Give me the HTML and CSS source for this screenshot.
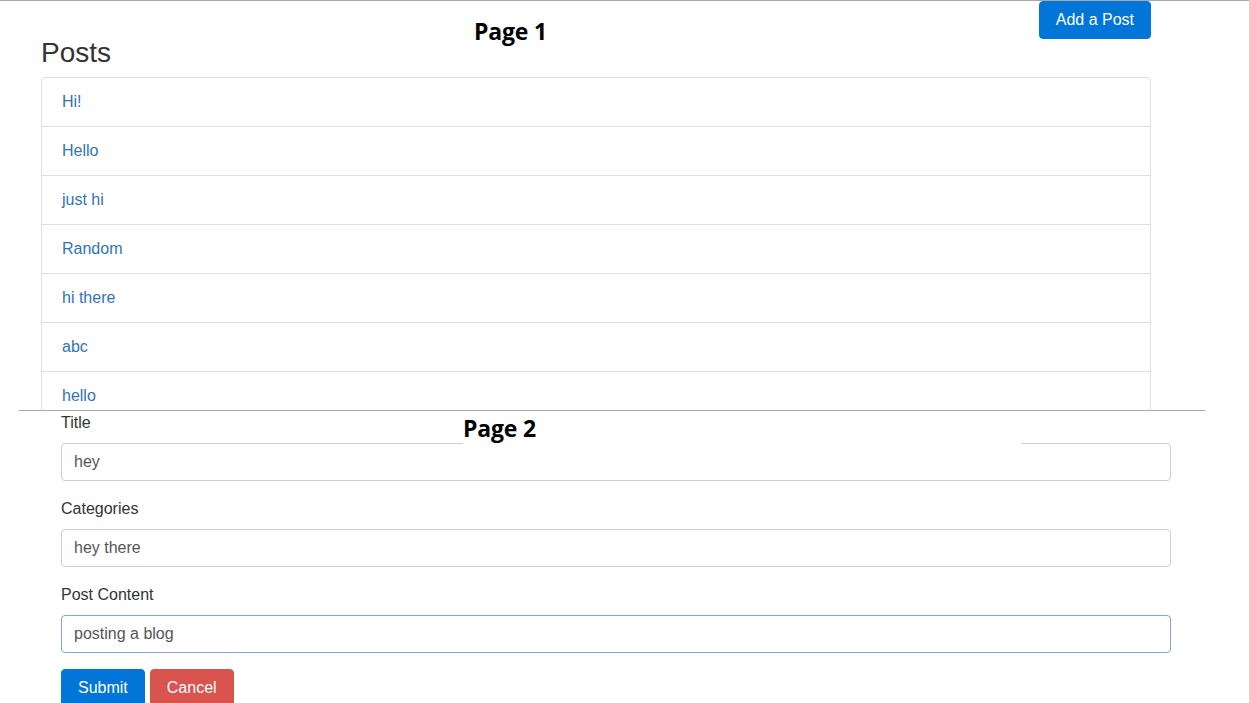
FILE: index.html
```html
<!DOCTYPE html>
<html lang="en">
<head>
<meta charset="utf-8">
<title>Posts</title>
<link rel="stylesheet" href="styles.css">
</head>
<body>
<section class="page page1">
  <div class="shot-label label1">Page 1</div>
  <div class="wrap1">
    <div class="header">
      <h3 class="title">Posts</h3>
      <button class="btn btn-primary">Add a Post</button>
    </div>
    <ul class="list-group">
      <li class="list-item"><a href="#">Hi!</a></li>
      <li class="list-item"><a href="#">Hello</a></li>
      <li class="list-item"><a href="#">just hi</a></li>
      <li class="list-item"><a href="#">Random</a></li>
      <li class="list-item"><a href="#">hi there</a></li>
      <li class="list-item"><a href="#">abc</a></li>
      <li class="list-item"><a href="#">hello</a></li>
    </ul>
  </div>
</section>
<section class="page page2">
  <div class="shot-label label2">Page 2</div>
  <form class="form">
    <div class="form-group">
      <label class="form-label">Title</label>
      <input class="form-control" type="text" value="hey">
    </div>
    <div class="form-group">
      <label class="form-label">Categories</label>
      <input class="form-control" type="text" value="hey there">
    </div>
    <div class="form-group">
      <label class="form-label">Post Content</label>
      <input class="form-control focused" type="text" value="posting a blog">
    </div>
    <div class="actions">
      <button type="button" class="btn btn-primary">Submit</button>
      <button type="button" class="btn btn-danger">Cancel</button>
    </div>
  </form>
</section>
</body>
</html>
```
FILE: styles.css
```css
* { box-sizing: border-box; }
html, body { margin: 0; padding: 0; background: #fff; }
body {
  font-family: "Liberation Sans", Arial, sans-serif;
  font-size: 16px;
  line-height: 24px;
  color: #333;
}
.page { position: relative; }
.page1 {
  border-top: 1px solid #a9a9a9;
  height: 410px;
  overflow: hidden;
}
.wrap1 { margin-left: 41px; width: 1110px; }
.header {
  display: flex;
  justify-content: space-between;
  align-items: flex-start;
}
.title {
  margin: 35px 0 7px;
  font-size: 28px;
  line-height: 34px;
  font-weight: 400;
  color: #333;
}
.btn {
  font-family: "Liberation Sans", Arial, sans-serif;
  font-size: 16px;
  line-height: 20px;
  padding: 8px 16px;
  border: 1px solid transparent;
  border-radius: 4px;
  color: #fff;
  cursor: pointer;
}
.btn-primary { background: #0275d8; border-color: #0275d8; }
.btn-danger { background: #d9534f; border-color: #d9534f; }
.list-group {
  list-style: none;
  margin: 0;
  padding: 0;
  border: 1px solid #dfdfdf;
  border-radius: 4px;
}
.list-item {
  padding: 12px 20px;
  line-height: 24px;
  border-top: 1px solid #dfdfdf;
}
.list-item:first-child { border-top: 0; }
.list-item a { color: #3174b5; text-decoration: none; }
.page2 {
  border-top: 1px solid #a9a9a9;
  margin-left: 19px;
  width: 1186px;
}
.form { margin-left: 42px; width: 1110px; }
.form-group { margin-bottom: 16px; }
.form-label {
  display: block;
  margin-bottom: 8px;
  line-height: 24px;
  color: #333;
}
.form-control {
  display: block;
  width: 100%;
  height: 38px;
  padding: 8px 12px;
  font-family: "Liberation Sans", Arial, sans-serif;
  font-size: 16px;
  line-height: 20px;
  color: #555;
  background: #fff;
  border: 1px solid #cfcfcf;
  border-radius: 4px;
  outline: none;
}
.form-control.focused { border-color: #7fa9d1; }
.actions { display: flex; gap: 5px; }
.shot-label {
  position: absolute;
  background: #fff;
  font-family: "Open Sans", "Noto Sans", sans-serif;
  font-weight: 700;
  font-size: 23px;
  line-height: 30px;
  color: #000;
  letter-spacing: -0.2px;
}
.label1 { left: 474px; top: 15px; width: 100px; }
.label2 { left: 444px; top: 2px; width: 559px; height: 31px; padding-left: 0; }
```
